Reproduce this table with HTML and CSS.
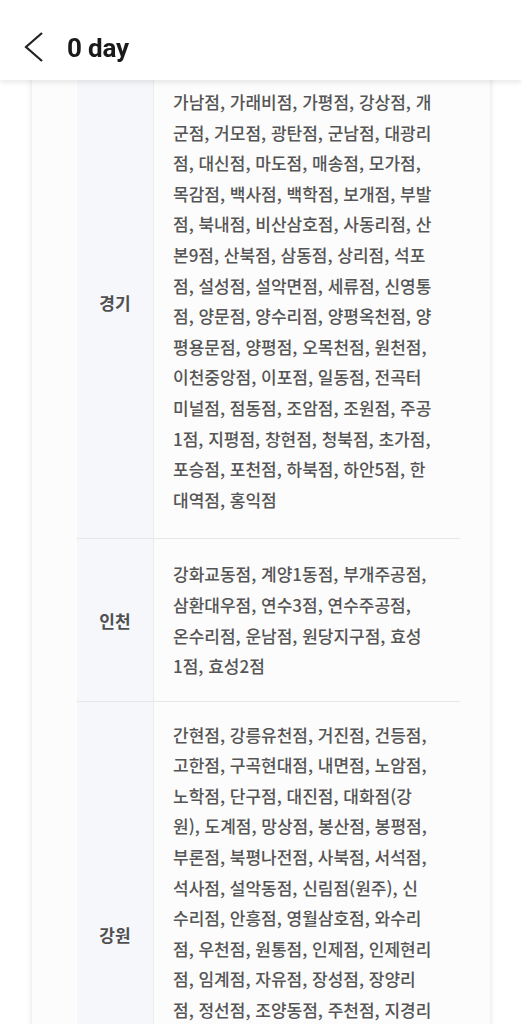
FILE: index.html
```html
<!DOCTYPE html>
<html lang="ko">
<head>
<meta charset="utf-8">
<title>0 day</title>
<link rel="stylesheet" href="styles.css">
</head>
<body>
<header class="topbar">
  <svg class="back" width="20" height="32" viewBox="0 0 20 32" aria-hidden="true">
    <polyline points="18,1 2,15 18,29" fill="none" stroke="#222" stroke-width="2.2" stroke-linejoin="miter"/>
  </svg>
  <h1 class="title">0 day</h1>
</header>
<main class="page">
  <section class="card">
    <div class="table">
      <div class="label">경기</div>
      <div class="value value-first">가남점, 가래비점, 가평점, 강상점, 개<br>군점, 거모점, 광탄점, 군남점, 대광리<br>점, 대신점, 마도점, 매송점, 모가점,<br>목감점, 백사점, 백학점, 보개점, 부발<br>점, 북내점, 비산삼호점, 사동리점, 산<br>본9점, 산북점, 삼동점, 상리점, 석포<br>점, 설성점, 설악면점, 세류점, 신영통<br>점, 양문점, 양수리점, 양평옥천점, 양<br>평용문점, 양평점, 오목천점, 원천점,<br>이천중앙점, 이포점, 일동점, 전곡터<br>미널점, 점동점, 조암점, 조원점, 주공<br>1점, 지평점, 창현점, 청북점, 초가점,<br>포승점, 포천점, 하북점, 하안5점, 한<br>대역점, 홍익점</div>
      <div class="label">인천</div>
      <div class="value">강화교동점, 계양1동점, 부개주공점,<br>삼환대우점, 연수3점, 연수주공점,<br>온수리점, 운남점, 원당지구점, 효성<br>1점, 효성2점</div>
      <div class="label">강원</div>
      <div class="value value-tight">간현점, 강릉유천점, 거진점, 건등점,<br>고한점, 구곡현대점, 내면점, 노암점,<br>노학점, 단구점, 대진점, 대화점(강<br>원), 도계점, 망상점, 봉산점, 봉평점,<br>부론점, 북평나전점, 사북점, 서석점,<br>석사점, 설악동점, 신림점(원주), 신<br>수리점, 안흥점, 영월삼호점, 와수리<br>점, 우천점, 원통점, 인제점, 인제현리<br>점, 임계점, 자유점, 장성점, 장양리<br>점, 정선점, 조양동점, 주천점, 지경리<br>점, 진부점, 철원점, 청호점, 초당점,<br>춘천중앙점, 태백점, 평창점, 포남점,<br>하장점, 현남점, 홍천점, 화천점, 황<br>지점, 횡성점</div>
    </div>
  </section>
</main>
</body>
</html>
```

FILE: styles.css
```css
* { box-sizing: border-box; }

html, body {
  margin: 0;
  padding: 0;
  background: #ffffff;
}

body {
  font-family: "Noto Sans CJK KR", "Noto Sans", sans-serif;
  color: #555555;
}

.topbar {
  position: fixed;
  top: 0;
  left: 0;
  right: 0;
  height: 80px;
  z-index: 10;
  background: #ffffff;
  box-shadow: 0 2px 6px rgba(0, 0, 0, 0.10);
  display: flex;
  align-items: center;
  gap: 23px;
  padding-left: 24px;
  padding-top: 15px;
}

.back {
  display: block;
  margin-top: 1px;
}

.title {
  margin: 0;
  font-family: Roboto, "Noto Sans", sans-serif;
  font-weight: 700;
  font-size: 26px;
  color: #1a1a1a;
  letter-spacing: -0.2px;
}

.page {
  padding: 27px 32px 0 32px;
}

.card {
  width: 458px;
  background: #fcfcfc;
  box-shadow: 0 0 6px rgba(0, 0, 0, 0.13);
  padding: 40px 30px 40px 45px;
}

.table {
  display: grid;
  grid-template-columns: 76px 307px;
}

.label {
  background: #f6f7fb;
  border-bottom: 1px solid #e7e7e7;
  display: flex;
  align-items: center;
  justify-content: center;
  font-size: 17px;
  font-weight: 700;
  color: #505050;
}

.value {
  border-left: 1px solid #ebebeb;
  border-bottom: 1px solid #e7e7e7;
  padding: 20px 20px 19px 19px;
  font-size: 17px;
  line-height: 30.6px;
  font-weight: 500;
  color: #555555;
  white-space: nowrap;
}

.value-first {
  padding-bottom: 23px;
}

.value-tight {
  padding-top: 18px;
}
```
